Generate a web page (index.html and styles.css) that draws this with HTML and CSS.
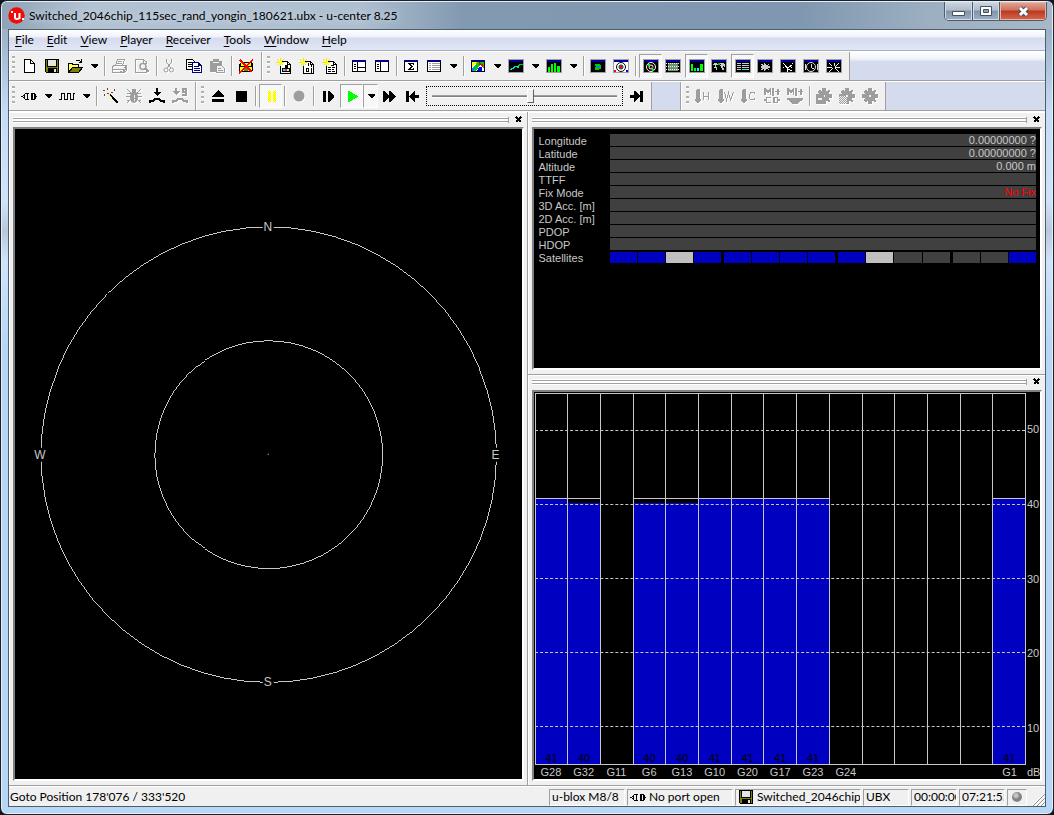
FILE: index.html
```html
<!DOCTYPE html>
<html lang="en">
<head>
<meta charset="utf-8">
<title>Switched_2046chip_115sec_rand_yongin_180621.ubx - u-center 8.25</title>
<link rel="stylesheet" href="styles.css">
</head>
<body>
<svg class="defs" aria-hidden="true">
  <defs>
    <pattern id="checker" width="2" height="2" patternUnits="userSpaceOnUse"><path fill="#9d9d9d" d="M0 0h1v1H0zM1 1h1v1H1z"/></pattern>
    <symbol id="i-new" viewBox="0 0 16 16"><path d="M3.500 1.500h6l4 4v9h-10z" fill="#fff" stroke="#000"/><path d="M9.500 1.500v4h4" fill="none" stroke="#000"/></symbol>
    <symbol id="i-save" viewBox="0 0 16 16"><path d="M1 1h14v14H2l-1-1z"/><path fill="#808000" d="M2 2h12v12H2z"/><path d="M3 1h10v8H3zM4 10h9v5H4z"/><path fill="#e4e4e4" d="M4 2h8v6H4zM10 11h2v3h-2z"/></symbol>
    <symbol id="i-open" viewBox="0 0 16 16"><path fill="#ff6" d="M1 6h4l1 1h6v3H5l-4 4z"/><path fill="#808000" d="M5 10h10l-4 4H1z"/><path fill="none" stroke="#000" d="M1.500 14V5.500h4v1h6v3M1.500 14.500l4-5h10l-4 5zM8.500 3.500l1-1h3l2 2M14.500 1v3.500h-3"/></symbol>
    <symbol id="i-print" viewBox="0 0 16 16"><path fill="none" stroke="#9d9d9d" d="M4.500 7.500l2-6h7l-2 6M7 3.500h4M6 5.500h5M1.500 8.500l2-1h11v3l-2 4h-11zM1.500 11.500h11v3M13 10l2-2v5l-2 2M9 13.500h2"/></symbol>
    <symbol id="i-preview" viewBox="0 0 16 16"><path fill="none" stroke="#9d9d9d" d="M12.500 5v-1l-3-2.500h-8v13h11v-2M9.500 2v3h3"/><circle cx="9" cy="8.500" r="3" fill="none" stroke="#9d9d9d" stroke-width="1.500"/><path stroke="#9d9d9d" stroke-width="2" d="M11 10l4 4"/></symbol>
    <symbol id="i-cut" viewBox="0 0 16 16"><g fill="none" stroke="#9d9d9d"><path d="M3.500 1v3l4 6M8.500 1v3l-4 6"/><circle cx="3" cy="12" r="2"/><circle cx="8.500" cy="12" r="2"/></g></symbol>
    <symbol id="i-copy" viewBox="0 0 16 16"><path fill="#fff" stroke="#000" d="M.5 1.500h6l2 2v8h-8z"/><path stroke="#000" d="M2 4.500h4M2 6.500h5M2 8.500h4"/><path fill="#fff" stroke="#000080" d="M6.500 4.500h6l3 3v7h-9z"/><path stroke="#000080" d="M12.500 4.500v3h3M8 8.500h5M8 10.500h6M8 12.500h6"/></symbol>
    <symbol id="i-paste" viewBox="0 0 16 16"><path fill="#9d9d9d" d="M1 3h3V1h6v2h3v4H7v7H1z"/><path stroke="#f0f0f0" d="M4 4.500h6"/><path fill="#f0f0f0" stroke="#9d9d9d" d="M7.500 7.500h5l3 3v4h-8z"/><path stroke="#9d9d9d" d="M9 10.500h3M9 12.500h5"/></symbol>
    <symbol id="i-clear" viewBox="0 0 16 16"><path d="M2 5l2-1h8l3 1v8l-2 1H3l-2-1V6z"/><path fill="#ff0" d="M3 5h10v3H3zM2 9h5v4H2zM9 9h5v4H9z"/><path fill="#808000" d="M6 10h4v3H6z"/><path stroke="red" stroke-width="1.500" d="M2 2l12 12M15 2L1 15"/></symbol>
    <symbol id="i-page" viewBox="0 0 16 16"><path fill="#fff" stroke="#000" d="M5.500 3.500h6l3 3v9h-10V8"/><path fill="none" stroke="#000" d="M11.500 3.500v3h3"/><path stroke="#f0e800" d="M4.500 0v8M0 4.500h8M1.500 1.500l6 6M7.500 1.500l-6 6"/><path fill="#ff0" d="M3 3h3v3H3z"/></symbol>
    <symbol id="i-pageimg" viewBox="0 0 16 16"><use href="#i-page"/><path d="M9 7h3v3H9zM6 10h8v4H6z"/><path fill="#0ff" d="M7 11h2v2H7z"/><path fill="#f0f" d="M9 11h2v2H9z"/><path fill="#ff0" d="M11 11h2v2h-2z"/></symbol>
    <symbol id="i-pagebin" viewBox="0 0 16 16"><use href="#i-page"/><path fill="none" stroke="#000" d="M9.500 5v3M12.500 6v3M7.500 10.500h2v3h-2zM12.500 10v5"/></symbol>
    <symbol id="i-pagetxt" viewBox="0 0 16 16"><use href="#i-page"/><path stroke="#000" stroke-dasharray="3 1" d="M9 7.500h4M6 9.500h7M6 11.500h6M6 13.500h7"/></symbol>
    <symbol id="i-win" viewBox="0 0 16 16"><path fill="#fff" stroke="#000" d="M1.500 2.500h13v11h-13z"/><path fill="#000080" d="M1 2h14v2H1z"/></symbol>
    <symbol id="i-split" viewBox="0 0 16 16"><use href="#i-win"/><path stroke="#000" d="M6.500 4v10M7 9.500h8M3 6.500h2M3 8.500h2M3 10.500h2"/></symbol>
    <symbol id="i-side" viewBox="0 0 16 16"><use href="#i-win"/><path stroke="#000" d="M6.500 4v10M3 6.500h2M3 8.500h2M3 10.500h2"/></symbol>
    <symbol id="i-sum" viewBox="0 0 16 16"><use href="#i-win"/><path fill="none" stroke="#000" d="M10.500 7V5.500H5.500l3 3-3 3h5V10M6.500 5.500l3 3-3 3"/></symbol>
    <symbol id="i-list" viewBox="0 0 16 16"><use href="#i-win"/><path stroke="#a0a0a0" stroke-dasharray="2 1 8 1" d="M3 5.500h11M3 7.500h11M3 9.500h11M3 11.500h11"/></symbol>
    <symbol id="i-dark" viewBox="0 0 16 16"><path fill="#a0a0a0" d="M0 1h16v14H0z"/><path d="M1 2h14v12H1z"/><path fill="#0000a0" d="M1 2h14v2H1z"/></symbol>
    <symbol id="i-map" viewBox="0 0 16 16"><use href="#i-win"/><path fill="#ff0" d="M2 4h5L2 10z"/><path fill="#08f" d="M2 10l5-5 1 3-4 5H2z"/><path fill="#0c0" d="M7 4h7v7l-4-4-4 6H4z"/><path stroke="#f00" stroke-width="2" d="M9 5l4 3"/><path fill="#00f" d="M9 9h3v4H7z"/></symbol>
    <symbol id="i-line" viewBox="0 0 16 16"><use href="#i-dark"/><path fill="none" stroke="#0c0" stroke-width="1.500" d="M10 8.500l2-2h3"/><path fill="none" stroke="#0dd" stroke-width="1.500" d="M2 11.500l3-1 2-2h2l2 1"/></symbol>
    <symbol id="i-hist" viewBox="0 0 16 16"><use href="#i-dark"/><path fill="#0f0" d="M2 9h2v5H2zM5 6h2v8H5zM8 5h2v9H8zM11 8h3v6h-3z"/></symbol>
    <symbol id="i-spot" viewBox="0 0 16 16"><use href="#i-dark"/><path fill="#0c0" d="M5 6h5v1h1v4H9v1H5V9h1V8H5z"/><path fill="#08f" d="M7 8h3v2H7z"/></symbol>
    <symbol id="i-sky" viewBox="0 0 16 16"><use href="#i-dark"/><circle cx="8" cy="9" r="4.500" fill="none" stroke="#fff"/><circle cx="8" cy="9" r="2" fill="none" stroke="#fff"/><path fill="#0f0" d="M5 6h2v2H5zM9 11h2v2H9z"/><path fill="red" d="M8 9h2v1H8z"/></symbol>
    <symbol id="i-skyw" viewBox="0 0 16 16"><use href="#i-dark"/><path fill="#fff" d="M1 4h14v10H1z"/><circle cx="8" cy="9" r="4.500" fill="none" stroke="#000"/><circle cx="8" cy="9" r="2" fill="none" stroke="#000"/><path fill="red" d="M7 8h2v2H7zM1 12h2v2H1z"/><path fill="#00f" d="M13 12h2v2h-2z"/></symbol>
    <symbol id="i-grid" viewBox="0 0 16 16"><use href="#i-dark"/><path fill="#888" d="M3 5h10v8H3z"/><path stroke="#eee" stroke-dasharray="1 1" d="M1 5.500h14M1 8.500h14M1 11.500h14"/><path stroke="#0c0" stroke-dasharray="2 2" d="M4 6.500h9M4 10.500h9"/></symbol>
    <symbol id="i-bars" viewBox="0 0 16 16"><use href="#i-dark"/><path fill="#0f0" d="M2 6h2v7H2zM5 10h2v3H5zM11 6h3v7h-3z"/><path fill="#0ff" d="M8 10h2v3H8z"/></symbol>
    <symbol id="i-world" viewBox="0 0 16 16"><use href="#i-dark"/><path fill="#ccc" d="M3 5h3v1h1v1H5v2h1v3H5v-2H3V9h1V7H2V6h1zM9 5h4v1h1v3h-1V8h-1v2h1v2h-2v-2h-1V8H9V7h1V6H9z"/><path fill="#0c0" d="M7 5h2v2H7z"/></symbol>
    <symbol id="i-rows" viewBox="0 0 16 16"><use href="#i-dark"/><path stroke="#ccc" stroke-dasharray="4 1 8" d="M2 5.500h12M2 7.500h12M2 9.500h12M2 11.500h12"/><path stroke="#0ff" d="M7 11.500h5"/></symbol>
    <symbol id="i-compass" viewBox="0 0 16 16"><use href="#i-dark"/><path fill="#ccc" d="M8 4l1 3 3-1-1 2 3 1-3 1 1 2-3-1-1 3-1-3-3 1 1-2-3-1 3-1-1-2 3 1z"/></symbol>
    <symbol id="i-needle" viewBox="0 0 16 16"><use href="#i-dark"/><path stroke="#fff" stroke-dasharray="1 2" d="M3 5l3 2M13 5l-3 3M3 9h2M11 9h3"/><path stroke="#fff" d="M4 6l5 6M8 11l4 2M7 11v3M8 10l4-3"/></symbol>
    <symbol id="i-clock" viewBox="0 0 16 16"><use href="#i-dark"/><circle cx="8" cy="9" r="4.500" fill="none" stroke="#ddd"/><path fill="none" stroke="#ddd" d="M8.500 5.500v4l3 2M2 6v6M14 6v6"/></symbol>
    <symbol id="i-rays" viewBox="0 0 16 16"><use href="#i-dark"/><path stroke="#eee" d="M3 5l3 3M13 5l-4 4M1 9.500h5M9 9.500h5M7 10l-4 4M9 10l4 4M8 5v3"/></symbol>
    <symbol id="i-plug" viewBox="0 0 16 16"><path d="M0 8h2v1H0zM2 7h1v1H2zM2 9h1v1H2zM3 6h1v5H3zM4 5h4v1H4zM4 11h4v1H4zM6 6h1v5H6zM10 5h2v7h-2zM12 5h2v1h-2zM12 11h2v1h-2zM13 6h2v5h-2zM15 8h1v1h-1z"/></symbol>
    <symbol id="i-wave" viewBox="0 0 16 16"><path fill="none" stroke="#000" d="M0 11.500h2.500v-6h3v6h3v-6h3v6h3v-6h1.500"/></symbol>
    <symbol id="i-wand" viewBox="0 0 16 16"><path stroke="#000" stroke-width="2" d="M7 7l8 8"/><path stroke="#ff0" d="M6 7l3 3"/><path fill="#803030" d="M0 2h2v1H0zM4 0h1v2H4zM8 4h2v1H8zM4 5h2v1H4zM1 6h1v2H1zM11 1h1v2h-1z"/></symbol>
    <symbol id="i-bug" viewBox="0 0 16 16"><path stroke="#9d9d9d" d="M1 1l4 4M15 1l-4 4M0 8.500h16M1 15l4-4M15 15l-4-4M1 5h4M11 5h4M1 12h3M12 12h3"/><ellipse cx="8" cy="9" rx="4" ry="6" fill="#9d9d9d"/><path stroke="#f0f0f0" d="M8.500 7v3M8.500 11v2"/><path fill="#9d9d9d" d="M6 1h4v3H6z"/></symbol>
    <symbol id="i-down" viewBox="0 0 16 16"><path d="M7 0h2v4h3L8 8 4 4h3z"/><path fill="none" stroke="#000" stroke-width="2" d="M1 15v-2h3l2-2h4l2 2h3v2"/></symbol>
    <symbol id="i-down9" viewBox="0 0 16 16"><path fill="#9d9d9d" d="M3 0h2v3h3L4 7 0 3h3z"/><path fill="none" stroke="#9d9d9d" stroke-width="2" d="M1 15v-2h3l2-2h4l2 2h3v2"/><path fill="none" stroke="#9d9d9d" stroke-width="1.500" d="M14 4h-3V1h3v6h-4"/></symbol>
    <symbol id="i-eject" viewBox="0 0 16 16"><path d="M8 2l6 6v1H2V8zM2 11h12v3H2z"/></symbol>
    <symbol id="i-stop" viewBox="0 0 16 16"><path d="M3 3h11v11H3z"/></symbol>
    <symbol id="i-pause" viewBox="0 0 16 16"><path fill="#ff0" d="M5 3h3v11H5zM10 3h3v11h-3z"/></symbol>
    <symbol id="i-rec" viewBox="0 0 16 16"><circle cx="8" cy="8" r="5.500" fill="#9d9d9d"/></symbol>
    <symbol id="i-step" viewBox="0 0 16 16"><path d="M3 3h3v11H3zM8 3h1l5 5v1l-5 5H8z"/></symbol>
    <symbol id="i-play" viewBox="0 0 16 16"><path fill="#0f0" d="M4 3h1l9 5v1l-9 5H4z"/></symbol>
    <symbol id="i-ff" viewBox="0 0 16 16"><path d="M2 3h1l5 4V3h1l6 5v1l-6 5H8v-4l-5 4H2z"/></symbol>
    <symbol id="i-first" viewBox="0 0 16 16"><path d="M2 3h3v11H2zM5 8l5-5h1v4h4v3h-4v4h-1z"/></symbol>
    <symbol id="i-last" viewBox="0 0 16 16"><path d="M12 3h3v11h-3zM12 8L7 3H6v4H2v3h4v4h1z"/></symbol>
    <symbol id="i-therm" viewBox="0 0 16 16"><path fill="#9d9d9d" d="M1 2l1-1h2l1 1v8l1 2-2 3H2l-2-3 1-2z"/></symbol>
    <symbol id="i-thermh" viewBox="0 0 16 16"><use href="#i-therm"/><path fill="none" stroke="#9d9d9d" d="M8.500 4v8M13.500 4v8M8 8.500h6"/></symbol>
    <symbol id="i-thermw" viewBox="0 0 16 16"><use href="#i-therm"/><path fill="none" stroke="#9d9d9d" d="M6.500 4l2 8 2-7 2 7 3-8"/></symbol>
    <symbol id="i-thermc" viewBox="0 0 16 16"><use href="#i-therm"/><path fill="none" stroke="#9d9d9d" d="M14 5.500l-1-1h-3l-1.500 2v4l1.500 1h3l1-1"/></symbol>
    <symbol id="i-mplus" viewBox="0 0 16 16"><path fill="#9d9d9d" d="M0 0h2l2 3 2-3h1v7H6V3L4 6 2 3v4H0zM8 0h2v8H8zM11 3h2V1h2v2h1v1h-1v3h-2V4h-2z"/></symbol>
    <symbol id="i-mplug" viewBox="0 0 16 16"><use href="#i-mplus"/><path fill="none" stroke="#9d9d9d" stroke-width="1.500" d="M0 12h2M7 9.500H3l-1 2 1 3h4M10 9.500v5h3l1-2.500-1-2.500zM14 12h2"/></symbol>
    <symbol id="i-mdisk" viewBox="0 0 16 16"><use href="#i-mplus"/><path fill="#9d9d9d" d="M0 10h16v2l-3 1-2 3H5l-2-3-3-1z"/></symbol>
    <symbol id="i-gear" viewBox="0 0 16 16"><path fill="#9d9d9d" d="M6 0h4v3l3-1 1 1-1 3h3v4h-3l1 3-1 1-3-1v3H6v-3l-3 1-1-1 1-3H0V6h3L2 3l1-1 3 1z"/><path fill="#f0f0f0" d="M7 7h2v2H7z"/></symbol>
    <symbol id="i-gearbox" viewBox="0 0 16 16"><use href="#i-gear"/><path fill="#9d9d9d" d="M0 7h8v9H0z"/><path fill="#f0f0f0" d="M2 10h4v2H2z"/></symbol>
    <symbol id="i-gearchk" viewBox="0 0 16 16"><use href="#i-gear"/><path fill="#f0f0f0" d="M0 8h8v8H0z"/><path fill="url(#checker)" d="M0 8h8v8H0z"/></symbol>
    <symbol id="i-arrow" viewBox="0 0 7 4"><path d="M0 0h7v1L4 4H3L0 1z"/></symbol>
    <symbol id="i-x" viewBox="0 0 8 8"><path fill="none" stroke="#000" stroke-width="2" d="M1 1l5 5M6 1L1 6"/></symbol>
  </defs>
</svg>

<div class="window">
  <header class="titlebar">
    <svg class="logo" viewBox="0 0 17 17" aria-hidden="true"><circle cx="8.500" cy="8.500" r="8.200" fill="#f00a0a"/><path fill="none" stroke="#fff" stroke-width="2" d="M7 6v4.500q0 1.500 2 1.500t2.500-1.500V6M11.500 6v6"/><path fill="#fff" d="M3 4h2v2H3zM14 11h2v2h-2z"/></svg>
    <h1 class="title">Switched_2046chip_115sec_rand_yongin_180621.ubx - u-center 8.25</h1>
    <div class="winbtns">
      <button class="wb min" aria-label="Minimize"><svg viewBox="0 0 13 11"><path fill="#fff" stroke="#445062" d="M.5 5.500h12v4H.5z"/></svg></button>
      <button class="wb max" aria-label="Maximize"><svg viewBox="0 0 13 11"><path fill="#fff" stroke="#445062" d="M.5.5h11v9H.5z"/><path fill="#8fa2b6" stroke="#445062" d="M3.500 3.500h5v3h-5z"/></svg></button>
      <button class="wb cls" aria-label="Close"><svg viewBox="0 0 13 11"><path stroke="#445062" stroke-width="5" d="M3 2l7 7M10 2L3 9"/><path stroke="#fff" stroke-width="3" d="M3 2l7 7M10 2L3 9"/></svg></button>
    </div>
  </header>

  <main class="client">
    <nav class="menubar" aria-label="Main menu">
      <button><u>F</u>ile</button><button><u>E</u>dit</button><button><u>V</u>iew</button><button><u>P</u>layer</button><button><u>R</u>eceiver</button><button><u>T</u>ools</button><button><u>W</u>indow</button><button><u>H</u>elp</button>
    </nav>

    <div class="rebar">
      <div class="toolbar">
        <span class="grip"></span>
        <button class="tb" aria-label="New"><svg><use href="#i-new"/></svg></button>
        <button class="tb" aria-label="Save"><svg><use href="#i-save"/></svg></button>
        <button class="tb" aria-label="Open"><svg><use href="#i-open"/></svg></button>
        <button class="dd" aria-label="Recent files"><svg><use href="#i-arrow"/></svg></button>
        <span class="sep"></span>
        <button class="tb off" aria-label="Print"><svg><use href="#i-print"/></svg></button>
        <button class="tb off" aria-label="Print preview"><svg><use href="#i-preview"/></svg></button>
        <span class="sep"></span>
        <button class="tb off" aria-label="Cut"><svg><use href="#i-cut"/></svg></button>
        <button class="tb" aria-label="Copy"><svg><use href="#i-copy"/></svg></button>
        <button class="tb off" aria-label="Paste"><svg><use href="#i-paste"/></svg></button>
        <span class="sep"></span>
        <button class="tb" aria-label="Clear"><svg><use href="#i-clear"/></svg></button>
      </div>
      <div class="toolbar">
        <span class="grip"></span>
        <button class="tb" aria-label="New packet view"><svg><use href="#i-pageimg"/></svg></button>
        <button class="tb" aria-label="New binary view"><svg><use href="#i-pagebin"/></svg></button>
        <button class="tb" aria-label="New text view"><svg><use href="#i-pagetxt"/></svg></button>
        <span class="sep"></span>
        <button class="tb" aria-label="Messages view"><svg><use href="#i-split"/></svg></button>
        <button class="tb" aria-label="Configuration view"><svg><use href="#i-side"/></svg></button>
        <span class="sep"></span>
        <button class="tb" aria-label="Statistic view"><svg><use href="#i-sum"/></svg></button>
        <button class="tb" aria-label="Table view"><svg><use href="#i-list"/></svg></button>
        <button class="dd" aria-label="Table options"><svg><use href="#i-arrow"/></svg></button>
        <span class="sep"></span>
        <button class="tb" aria-label="Map view"><svg><use href="#i-map"/></svg></button>
        <button class="dd" aria-label="Map options"><svg><use href="#i-arrow"/></svg></button>
        <button class="tb" aria-label="Chart view"><svg><use href="#i-line"/></svg></button>
        <button class="dd" aria-label="Chart options"><svg><use href="#i-arrow"/></svg></button>
        <button class="tb" aria-label="Histogram view"><svg><use href="#i-hist"/></svg></button>
        <button class="dd" aria-label="Histogram options"><svg><use href="#i-arrow"/></svg></button>
        <span class="sep"></span>
        <button class="tb" aria-label="Camera view"><svg><use href="#i-spot"/></svg></button>
        <button class="tb" aria-label="Deviation map"><svg><use href="#i-skyw"/></svg></button>
        <span class="sep"></span>
        <button class="tb on" aria-label="Sky view"><svg><use href="#i-sky"/></svg></button>
        <button class="tb" aria-label="Satellite history"><svg><use href="#i-grid"/></svg></button>
        <button class="tb on" aria-label="Satellite level"><svg><use href="#i-bars"/></svg></button>
        <button class="tb" aria-label="World view"><svg><use href="#i-world"/></svg></button>
        <button class="tb on" aria-label="Data view"><svg><use href="#i-rows"/></svg></button>
        <button class="tb" aria-label="Compass"><svg><use href="#i-compass"/></svg></button>
        <button class="tb" aria-label="Speedometer"><svg><use href="#i-needle"/></svg></button>
        <button class="tb" aria-label="Clock"><svg><use href="#i-clock"/></svg></button>
        <button class="tb" aria-label="Altitude meter"><svg><use href="#i-rays"/></svg></button>
      </div>
    </div>
    <div class="rebar second">
      <div class="toolbar">
        <span class="grip"></span>
        <button class="tb" aria-label="Connection"><svg><use href="#i-plug"/></svg></button>
        <button class="dd" aria-label="Choose port"><svg><use href="#i-arrow"/></svg></button>
        <button class="tb" aria-label="Baud rate"><svg><use href="#i-wave"/></svg></button>
        <button class="dd" aria-label="Choose baud rate"><svg><use href="#i-arrow"/></svg></button>
        <span class="sep"></span>
        <button class="tb" aria-label="Autobauding"><svg><use href="#i-wand"/></svg></button>
        <button class="tb off" aria-label="Debug messages"><svg><use href="#i-bug"/></svg></button>
        <button class="tb" aria-label="Firmware update"><svg><use href="#i-down"/></svg></button>
        <button class="tb off" aria-label="Flash update"><svg><use href="#i-down9"/></svg></button>
      </div>
      <div class="toolbar">
        <span class="grip"></span>
        <button class="tb" aria-label="Eject"><svg><use href="#i-eject"/></svg></button>
        <button class="tb" aria-label="Stop"><svg><use href="#i-stop"/></svg></button>
        <span class="sep"></span>
        <button class="tb on" aria-label="Pause"><svg><use href="#i-pause"/></svg></button>
        <span class="sep"></span>
        <button class="tb off" aria-label="Record"><svg><use href="#i-rec"/></svg></button>
        <span class="sep"></span>
        <button class="tb" aria-label="Step"><svg><use href="#i-step"/></svg></button>
        <button class="tb on" aria-label="Play"><svg><use href="#i-play"/></svg></button>
        <button class="dd on" aria-label="Play speed"><svg><use href="#i-arrow"/></svg></button>
        <button class="tb" aria-label="Fast forward"><svg><use href="#i-ff"/></svg></button>
        <button class="tb" aria-label="To start"><svg><use href="#i-first"/></svg></button>
        <input class="slider" type="range" min="0" max="1000" value="534" aria-label="Player position">
        <button class="tb" aria-label="To end"><svg><use href="#i-last"/></svg></button>
      </div>
      <div class="toolbar apart">
        <span class="grip"></span>
        <button class="tb off" aria-label="Hot start"><svg><use href="#i-thermh"/></svg></button>
        <button class="tb off" aria-label="Warm start"><svg><use href="#i-thermw"/></svg></button>
        <button class="tb off" aria-label="Cold start"><svg><use href="#i-thermc"/></svg></button>
        <button class="tb off" aria-label="Monitor ports"><svg><use href="#i-mplug"/></svg></button>
        <button class="tb off" aria-label="Monitor device"><svg><use href="#i-mdisk"/></svg></button>
        <span class="sep"></span>
        <button class="tb off" aria-label="Save configuration"><svg><use href="#i-gearbox"/></svg></button>
        <button class="tb off" aria-label="Load configuration"><svg><use href="#i-gearchk"/></svg></button>
        <button class="tb off" aria-label="Configuration"><svg><use href="#i-gear"/></svg></button>
      </div>
    </div>

    <div class="dock">
      <section class="pane skypane" aria-label="Sky view">
        <div class="pgrip"><i></i><button aria-label="Close sky view"><svg><use href="#i-x"/></svg></button></div>
        <div class="view">
          <svg class="sky" viewBox="0 0 507 651">
            <g fill="none" stroke="#c8c8c8"><circle cx="254" cy="326" r="228"/><circle cx="254" cy="326" r="114"/></g>
            <path fill="#000" d="M248 91h11v14h-11zM248 547h11v14h-11zM19 319h13v14H19zM475 319h13v14h-13z"/>
            <path fill="#c8c8c8" d="M253 325h1v1h-1z"/>
            <g fill="#c8c8c8" text-anchor="middle"><text x="253" y="102">N</text><text x="253" y="558">S</text><text x="25" y="330">W</text><text x="481" y="330">E</text></g>
          </svg>
        </div>
      </section>
      <div class="rightcol">
        <section class="pane datapane" aria-label="Data view">
          <div class="pgrip"><i></i><button aria-label="Close data view"><svg><use href="#i-x"/></svg></button></div>
          <div class="view">
            <table class="data">
              <tbody>
              <tr><th scope="row">Longitude</th><td>0.00000000 ?</td></tr>
              <tr><th scope="row">Latitude</th><td>0.00000000 ?</td></tr>
              <tr><th scope="row">Altitude</th><td>0.000 m</td></tr>
              <tr><th scope="row">TTFF</th><td></td></tr>
              <tr><th scope="row">Fix Mode</th><td class="nofix">No Fix</td></tr>
              <tr><th scope="row">3D Acc. [m]</th><td></td></tr>
              <tr><th scope="row">2D Acc. [m]</th><td></td></tr>
              <tr><th scope="row">PDOP</th><td></td></tr>
              <tr><th scope="row">HDOP</th><td></td></tr>
              <tr><th scope="row">Satellites</th><td class="satcell"><div class="sats"><div class="g"><i class="b"></i><i class="b"></i><i class="s"></i><i class="b"></i></div><div class="g"><i class="b"></i><i class="b"></i><i class="b"></i><i class="b"></i></div><div class="g"><i class="b"></i><i class="s"></i><i></i><i></i></div><div class="g three"><i></i><i></i><i class="b"></i></div></div></td></tr>
              </tbody>
            </table>
          </div>
        </section>
        <section class="pane levelpane" aria-label="Satellite level">
          <div class="pgrip"><i></i><button aria-label="Close satellite level"><svg><use href="#i-x"/></svg></button></div>
          <div class="view chart">
            <div class="plot">
              <div class="col"><div class="peak"></div><div class="bar full">41</div></div>
              <div class="col"><div class="peak"></div><div class="bar">40</div></div>
              <div class="col"></div>
              <div class="col"><div class="peak"></div><div class="bar">40</div></div>
              <div class="col"><div class="peak"></div><div class="bar">40</div></div>
              <div class="col"><div class="peak"></div><div class="bar full">41</div></div>
              <div class="col"><div class="peak"></div><div class="bar full">41</div></div>
              <div class="col"><div class="peak"></div><div class="bar full">41</div></div>
              <div class="col"><div class="peak"></div><div class="bar full">41</div></div>
              <div class="col"></div><div class="col"></div><div class="col"></div><div class="col"></div><div class="col"></div>
              <div class="col"><div class="peak"></div><div class="bar full">41</div></div>
              <div class="lines"><i></i><i></i><i></i><i></i><i></i></div>
            </div>
            <div class="scale"><span>50</span><span>40</span><span>30</span><span>20</span><span>10</span></div>
            <div class="names"><span>G28</span><span>G32</span><span>G11</span><span>G6</span><span>G13</span><span>G10</span><span>G20</span><span>G17</span><span>G23</span><span>G24</span><span></span><span></span><span></span><span></span><span>G1</span></div>
            <div class="unit">dB</div>
          </div>
        </section>
      </div>
    </div>

    <footer class="status">
      <span class="msg">Goto Position 178'076 / 333'520</span>
      <span class="cell w76">u-blox M8/8</span>
      <span class="cell w106"><svg><use href="#i-plug"/></svg>No port open</span>
      <span class="cell w126"><svg><use href="#i-save"/></svg>Switched_2046chip</span>
      <span class="cell w46">UBX</span>
      <span class="cell w46">00:00:00</span>
      <span class="cell w46">07:21:55</span>
      <span class="cell led"><b></b></span>
      <svg class="sizer" viewBox="0 0 14 14" aria-hidden="true"><path stroke="#fff" stroke-width="2" d="M2 14L14 2M6 14l8-8M10 14l4-4"/><path stroke="#909090" d="M2 14L14 2M6 14l8-8M10 14l4-4"/></svg>
    </footer>
  </main>
</div>
</body>
</html>
```
FILE: styles.css
```css
* { box-sizing: border-box; }
body { margin: 0; background: #10161e; color: #000; font: 12px/16px Lato, "Noto Sans CJK KR", sans-serif; }
button { margin: 0; padding: 0; border: 0; background: none; font: inherit; color: inherit; }
.defs { position: absolute; width: 0; height: 0; }
circle, ellipse { shape-rendering: geometricPrecision; }

.window {
  min-height: 100vh; display: flex; flex-direction: column;
  padding: 0 7px 7px; border: 1px solid #1b222c; border-radius: 7px;
  background: linear-gradient(#a7bbcf 0, #9bb2c9 30px, #c4dcf4 110px, #cfe4fa 200px, #b8c9da 230px, #cfe4fa 260px, #b6d8f6 340px);
  box-shadow: inset 0 0 0 1px #e4eef8;
}
.titlebar {
  flex: none; height: 27px; margin: 1px -6px 0; padding: 0 0 0 6px; display: flex; align-items: center; gap: 4px; border-radius: 5px 5px 0 0;
  background: linear-gradient(90deg, #8fa3b6, #b2c2d2 8%, #aebfd0 34%, #8199b1 44%, #7f97b0 76%, #9cafc1 88%, #a9b8c8);
}
.logo { width: 17px; height: 17px; }
.title { flex: 1; min-width: 0; margin: 0; font: inherit; white-space: nowrap; overflow: hidden; text-shadow: 0 0 6px #dce6f0; }
.winbtns { align-self: flex-start; display: flex; margin-right: 5px; border: 1px solid #4d5b6c; border-top: 0; border-radius: 0 0 5px 5px; overflow: hidden; }
.wb { height: 18px; display: grid; place-items: center; border-right: 1px solid #4d5b6c; background: linear-gradient(#cdd6e0, #aebccb 45%, #7f92a7 50%, #9fb2c4); box-shadow: inset 0 0 0 1px #d0dbe5; }
.wb svg { width: 13px; height: 11px; overflow: visible; }
.min { width: 28px; }
.max { width: 27px; }
.cls { width: 46px; border-right: 0; background: linear-gradient(#e3a899, #d0705d 45%, #b93820 50%, #d8684c); box-shadow: inset 0 0 0 1px #e8b5a8; }

.client { flex: 1; min-width: 0; display: flex; flex-direction: column; background: #f0f0f0; border: 1px solid #4f5d6c; }
.menubar { flex: none; height: 21px; display: flex; border-bottom: 1px solid #a8b0c0; background: linear-gradient(#fff, #eef1f9 35%, #d5dbee 40%, #e2e7f5); }
.menubar button { padding: 0 7px 0 6px; line-height: 20px; }
.menubar u { text-underline-offset: 2px; }

.rebar { flex: none; height: 30px; display: flex; border-top: 1px solid #fff; border-bottom: 1px solid #a0a0a0; background: linear-gradient(#fff, #eef2fa 25%, #d4dbed 35%); }
.rebar.second { background: #d4dbed; }
.toolbar { display: flex; align-items: center; padding: 0 3px; background: #f0f0f0; border-right: 1px solid #a0a0a0; box-shadow: inset 1px 0 #fff; }
.toolbar + .toolbar { padding-left: 5px; }
.toolbar.apart { margin-left: 28px; border-left: 1px solid #a0a0a0; }
.grip { width: 3px; height: 20px; margin-right: 3px; background: repeating-linear-gradient(#b0b0b0 0 2px, #fff 2px 3px, #f0f0f0 3px 5px); }
.tb, .dd { flex: none; width: 23px; height: 24px; display: flex; align-items: center; padding-left: 3px; }
.dd { width: 15px; padding-left: 4px; }
.tb svg { width: 16px; height: 16px; shape-rendering: crispEdges; }
.dd svg { width: 7px; height: 4px; shape-rendering: crispEdges; }
.off svg { filter: drop-shadow(1px 1px 0 #fff); }
.on { border: 1px solid; border-color: #a0a0a0 #fff #fff #a0a0a0; background: repeating-conic-gradient(#fff 0 25%, #f0f0f0 0 50%) 0 0 / 2px 2px; }
.sep { flex: none; width: 6px; height: 20px; background: linear-gradient(90deg, #f0f0f0 2px, #a0a0a0 2px 3px, #fff 3px 4px, #f0f0f0 4px); }
.slider { appearance: none; flex: none; width: 197px; height: 20px; margin: 0 2px; padding: 0 5px; border: 1px dotted #000; background: none; }
.slider::-webkit-slider-runnable-track { height: 3px; background: linear-gradient(#a0a0a0 1px, #808080 1px 2px, #fff 2px); }
.slider::-webkit-slider-thumb { appearance: none; width: 7px; height: 14px; margin-top: -6px; background: #f0f0f0; border: 1px solid; border-color: #fff #606060 #606060 #fff; }

.dock { flex: 1; min-height: 0; display: grid; grid-template-columns: 518fr 519fr; border-top: 1px solid #fff; border-bottom: 1px solid #a0a0a0; }
.rightcol { min-width: 0; min-height: 0; display: grid; grid-template-rows: 263fr 411fr; border-left: 1px solid #a0a0a0; }
.pane { min-width: 0; min-height: 0; display: flex; flex-direction: column; padding: 0 3px 4px 4px; box-shadow: inset 1px 1px #fff; }
.datapane { border-bottom: 1px solid #a0a0a0; }
.pgrip { flex: none; height: 15px; display: flex; align-items: center; gap: 6px; padding: 0; }
.pgrip i { flex: 1; height: 6px; border-right: 1px solid #a0a0a0; background: linear-gradient(#fff 1px, #a0a0a0 1px 2px, #fff 2px 4px, #a0a0a0 4px 5px, #fff 5px); }
.pgrip button { width: 8px; height: 8px; margin-right: 1px; }
.pgrip svg { display: block; width: 8px; height: 8px; shape-rendering: crispEdges; }
.view { flex: 1; min-height: 0; background: #000; color: #c8c8c8; border: 2px solid; border-color: #808080 #fff #fff #808080; font: 11px/13px "Liberation Sans", Arial, sans-serif; }
.sky { display: block; width: 100%; height: 100%; font-size: 12px; }
.sky circle { shape-rendering: crispEdges; }

.data { width: 100%; table-layout: fixed; border-collapse: separate; border-spacing: 0; line-height: 12px; }
.datapane .view { padding: 5px 4px 0; }
.data th { width: 72px; height: 13px; padding: 1px 0 0 1px; font-weight: 400; text-align: left; white-space: nowrap; }
.data td { height: 13px; padding: 0; text-align: right; background: #404040; border-bottom: 1px solid #000; }
.data .nofix { color: #f00; }
.data .satcell { background: #000; border: 0; }
.sats { display: grid; grid-template-columns: 111fr 111fr 111fr 83fr; gap: 3px; height: 11px; }
.g { display: grid; grid-template-columns: repeat(4, 1fr); gap: 1px; }
.g.three { grid-template-columns: repeat(3, 1fr); }
.sats i { background: #404040; }
.sats .b { background: #0000c0; }
.sats .s { background: #c0c0c0; }

.chart { display: grid; grid-template-columns: 1fr 14px; grid-template-rows: 1fr 14px; padding: 1px 0 0 1px; }
.plot { position: relative; min-height: 0; display: grid; grid-template-columns: repeat(15, 1fr); border: 1px solid #c8c8c8; border-left: 0; }
.col { display: flex; flex-direction: column; justify-content: flex-end; border-left: 1px solid #c8c8c8; position: relative; }
.peak { position: absolute; left: 0; right: 0; top: 28%; border-top: 1px solid #c8c8c8; }
.bar { height: 70.4%; display: flex; align-items: flex-end; justify-content: center; background: #0000c0; color: #000; line-height: 12px; }
.bar.full { height: 71.8%; }
.lines { position: absolute; inset: 0; display: grid; grid-template-rows: 10% repeat(4, 20%); }
.lines i { border-bottom: 1px dashed #c8c8c8; }
.scale { display: grid; grid-template-rows: 20% 20% 20% 20% 20%; align-items: center; padding-left: 1px; }
.names { display: grid; grid-template-columns: repeat(15, 1fr); text-align: center; line-height: 14px; }
.unit { line-height: 15px; padding-left: 1px; }

.status { flex: none; height: 20px; display: flex; align-items: center; gap: 2px; padding-top: 1px; border-top: 1px solid #fff; }
.msg { flex: 1; min-width: 0; padding-left: 1px; white-space: nowrap; overflow: hidden; }
.cell { flex: none; height: 17px; display: flex; align-items: center; gap: 3px; padding-left: 2px; overflow: hidden; white-space: nowrap; border: 1px solid; border-color: #a0a0a0 #fff #fff #a0a0a0; }
.cell svg { flex: none; width: 16px; height: 16px; shape-rendering: crispEdges; }
.w76 { width: 76px; }
.w106 { width: 106px; }
.w126 { width: 126px; }
.w46 { width: 46px; }
.led { width: 20px; padding-left: 4px; }
.led b { width: 10px; height: 10px; border-radius: 50%; background: radial-gradient(circle at 40% 35%, #c8c8c8 15%, #808080 45%, #909090); }
.sizer { flex: none; align-self: flex-end; width: 14px; height: 14px; margin-left: 2px; }
```
